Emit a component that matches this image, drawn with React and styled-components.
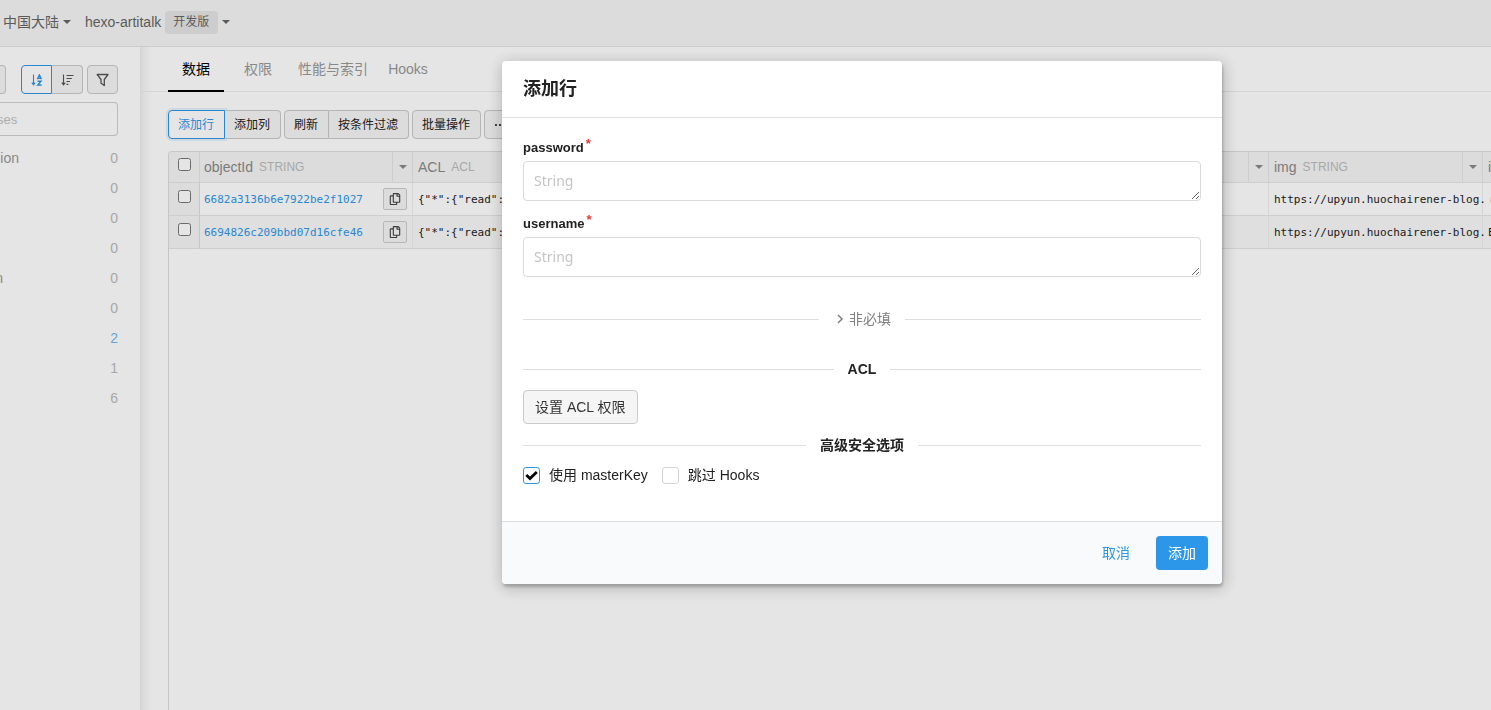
import React from "react";
import styled, { createGlobalStyle, css } from "styled-components";
import { FaRegCopy } from "react-icons/fa";

const sans = `"Liberation Sans", "Noto Sans CJK SC", sans-serif`;
const mono = `"DejaVu Sans Mono", monospace`;
const blue = "#2c97e9";

const GlobalStyle = createGlobalStyle`
  *, *::before, *::after { box-sizing: border-box; }
  body { margin: 0; background: #fff; font: 14px/20px ${sans}; color: #222; overflow: hidden; }
  button, input, textarea { font-family: inherit; }
`;

const Page = styled.div`
  display: flex;
  flex-direction: column;
  height: 100vh;
  overflow: hidden;
`;

const TopBar = styled.header`
  display: flex;
  align-items: center;
  height: 47px;
  padding: 0 3px 2px;
  border-bottom: 1px solid #e2e2e2;
  background: #f5f5f5;
  color: #666;
`;

const MenuButton = styled.button`
  display: flex;
  align-items: center;
  gap: 4px;
  margin-right: 14px;
  padding: 0;
  border: 0;
  background: none;
  color: inherit;
  font-size: 14px;
  line-height: 20px;
`;

const Stage = styled.span`
  padding: 2px 9px 2px 8px;
  border-radius: 4px;
  background: #e5e5e5;
  font-size: 12px;
  line-height: 19px;
`;

const Caret = styled.span`
  border: 4px solid transparent;
  border-top-color: currentColor;
  border-bottom: 0;
`;

const Columns = styled.div`
  display: flex;
  flex: 1;
  min-height: 0;
`;

const Sidebar = styled.aside`
  flex: none;
  width: 140px;
  padding: 18px 22px 0 0;
`;

const SideTools = styled.div`
  display: flex;
  gap: 4px;
  margin-bottom: 8px;
`;

const Group = styled.div`
  display: flex;
`;

const Button = styled.button`
  display: flex;
  align-items: center;
  justify-content: center;
  height: 29px;
  padding: 0 10px 0 9px;
  border: 1px solid #cacaca;
  border-radius: 4px;
  background: #f5f5f5;
  color: #222;
  font-size: 12px;
  line-height: 18px;
  white-space: nowrap;

  ${Group} > &:not(:first-child) {
    border-left: 0;
    border-top-left-radius: 0;
    border-bottom-left-radius: 0;
  }
  ${Group} > &:not(:last-child) {
    border-top-right-radius: 0;
    border-bottom-right-radius: 0;
  }
  ${(p) => p.$active && css`
    border-color: ${blue};
    background: #fff;
    color: ${blue};
  `}
  ${(p) => p.$focused && css`
    box-shadow: 0 0 0 2px rgba(44, 151, 233, 0.12);
  `}
`;

const IconButton = styled(Button)`
  width: 31px;
  padding: 0;
  color: ${(p) => (p.$active ? blue : "#555")};
`;

const EdgeButton = styled(IconButton)`
  width: 6px;
  margin-right: auto;
  border-left: 0;
  border-radius: 0 4px 4px 0;
`;

const Search = styled.input`
  display: block;
  width: 100%;
  height: 34px;
  padding: 0;
  border: 1px solid #d0d0d0;
  border-left: 0;
  border-radius: 0 4px 4px 0;
  background: #fff;
  font-size: 13px;
  text-indent: -3px;
  &::placeholder { color: #c2c2c2; }
`;

const ClassList = styled.ul`
  margin: 7px 0 0;
  padding: 0;
  list-style: none;
`;

const ClassItem = styled.li`
  display: flex;
  justify-content: space-between;
  height: 30px;
  line-height: 30px;
  color: #999;
`;

const ClassName = styled.span`
  display: flex;
  justify-content: flex-end;
  width: ${(p) => p.$width}px;
`;

const Count = styled.span`
  color: ${(p) => (p.$active ? "#74b9f0" : "#bbb")};
`;

const Main = styled.main`
  display: flex;
  flex: 1;
  flex-direction: column;
  min-width: 0;
  background: linear-gradient(to right, #ededed, #f8f8f8 5px, #fff 12px);
`;

const Tabs = styled.nav`
  display: flex;
  height: 45px;
  padding-left: 28px;
  border-bottom: 1px solid #ececec;
`;

const Tab = styled.a`
  width: ${(p) => p.$width}px;
  height: 45px;
  border-bottom: 2px solid ${(p) => (p.$active ? "#000" : "transparent")};
  color: ${(p) => (p.$active ? "#000" : "#999")};
  line-height: 44px;
  text-align: center;
  text-decoration: none;
  white-space: nowrap;
`;

const Toolbar = styled.div`
  display: flex;
  gap: 3px;
  padding: 18px 0 12px 28px;
`;

const Sheet = styled.div`
  flex: 1;
  margin-left: 28px;
  overflow: hidden;
  border: solid #ddd;
  border-width: 1px 0 0 1px;
  border-top-left-radius: 4px;
`;

const Table = styled.table`
  width: 1528px;
  table-layout: fixed;
  border-collapse: separate;
  border-spacing: 0;
`;

const Col = styled.col`
  width: ${(p) => p.$width}px;
`;

const Th = styled.th`
  height: 31px;
  padding: 0;
  border: solid #e6e6e6;
  border-width: 0 1px 1px 0;
  background: #f5f5f5;
  color: #8a8a8a;
  font-weight: 400;
  text-align: left;
`;

const HeadCell = styled.div`
  display: flex;
  align-items: center;
  height: 30px;
  padding-left: ${(p) => (p.$key ? 4 : 5)}px;
`;

const Type = styled.small`
  flex: 1;
  margin-left: 6px;
  color: #bbb;
  font-size: 12px;
`;

const ColumnMenu = styled.button`
  display: flex;
  align-items: center;
  justify-content: center;
  width: 20px;
  height: 30px;
  margin-left: auto;
  padding: 0;
  border: 0;
  border-left: 1px solid #e6e6e6;
  background: none;
  color: #888;
`;

const Td = styled.td`
  height: 33px;
  padding: 0 0 0 ${(p) => (p.$key ? 4 : 5)}px;
  border: solid #e6e6e6;
  border-width: 0 1px 1px 0;
  border-right-color: #eee;
  color: ${(p) => (p.$empty ? "#ccc" : "#222")};
  font: 11px/16px ${mono};
  white-space: nowrap;
  tr:nth-child(even) > & { background: #f9f9f9; }
`;

const Value = styled.span`
  display: block;
  padding-top: 2px;
`;

const CheckCell = styled(Td)`
  padding: 0;
  border-right-color: #ddd;
  tr:nth-child(n) > & { background: #f5f5f5; }
`;

const RowCheck = styled.input`
  display: block;
  width: 13px;
  height: 13px;
  margin: 0 0 5px 9px;
`;

const IdCell = styled.div`
  display: flex;
  align-items: center;
  justify-content: space-between;
  padding-right: 5px;
  color: ${blue};
`;

const CopyButton = styled.button`
  display: flex;
  align-items: center;
  justify-content: center;
  width: 24px;
  height: 22px;
  padding: 0;
  border: 1px solid #ccc;
  border-radius: 2px;
  background: #f5f5f5;
  color: #444;
`;

const Overlay = styled.div`
  position: fixed;
  inset: 0;
  display: flex;
  align-items: flex-start;
  justify-content: center;
  padding: 61px 0 0 233px;
  background: rgba(0, 0, 0, 0.1);
`;

const Dialog = styled.form`
  width: 720px;
  overflow: hidden;
  border-radius: 4px;
  background: #fff;
  box-shadow: 1px 3px 3px rgba(0, 0, 0, 0.2), 1px 3px 15px 2px rgba(0, 0, 0, 0.2);
`;

const Title = styled.h2`
  margin: 0;
  padding: 14px 21px;
  border-bottom: 1px solid #dedede;
  font-size: 18px;
  line-height: 28px;
`;

const Body = styled.div`
  padding: 20px 21px 37px;
`;

const Field = styled.div`
  margin-bottom: 13px;
`;

const FieldLabel = styled.label`
  display: flex;
  margin-bottom: 4px;
  font-size: 13px;
  font-weight: 700;
  line-height: 19px;
`;

const Required = styled.span`
  margin-left: 2px;
  color: #e33;
  line-height: 12px;
`;

const TextArea = styled.textarea`
  display: block;
  width: 100%;
  height: 40px;
  padding: 9px 10px;
  border: 1px solid #dadada;
  border-radius: 4px;
  font: 14px/20px "Noto Sans", "Noto Sans CJK SC", sans-serif;
  resize: vertical;
  &::placeholder { color: #c4c4c4; }
`;

const Divider = styled.h3`
  display: flex;
  align-items: center;
  gap: 14px;
  margin: ${(p) => (p.$spaced ? "32px 0 30px" : "0 0 11px")};
  font-size: 14px;
  line-height: 20px;
  &::before, &::after {
    flex: 1;
    height: 1px;
    background: #dedede;
    content: "";
  }
`;

const Toggle = styled.button`
  display: flex;
  align-items: center;
  padding: 0 0 0 4px;
  border: 0;
  background: none;
  color: #808080;
  font-size: 14px;
  line-height: 20px;
`;

const AclButton = styled(Button)`
  height: 34px;
  margin-bottom: 11px;
  padding: 0 11px;
  color: #333;
  font-size: 14px;
  line-height: 20px;
`;

const Options = styled.div`
  display: flex;
  gap: 14px;
`;

const Option = styled.label`
  display: flex;
  align-items: center;
  gap: 9px;
  line-height: 18px;
`;

const Tick = styled.input`
  appearance: none;
  width: 17px;
  height: 17px;
  margin: 0;
  border: 1px solid #d4d4d4;
  border-radius: 3px;
  background: #fff;
  &:checked {
    border-color: ${blue};
  }
`;

const TickBox = styled.span`
  display: grid;
  & > * { grid-area: 1 / 1; }
  & > svg { pointer-events: none; }
`;

const Footer = styled.footer`
  display: flex;
  justify-content: flex-end;
  gap: 14px;
  padding: 14px;
  border-top: 1px solid #dedede;
  background: #f9fafc;
`;

const Action = styled.button`
  height: 34px;
  padding: 0 12px;
  border: 0;
  border-radius: 4px;
  background: ${(p) => (p.$primary ? blue : "none")};
  color: ${(p) => (p.$primary ? "#fff" : blue)};
  font-size: 14px;
  line-height: 20px;
`;

const DownArrow = () => <path d="M2.500 .5v10.500M.8 8.700l1.700 2.200 1.700-2.200" fill="none" stroke="currentColor" strokeWidth="1.100" />;

const SortAlphaIcon = () => (
  <svg width="12" height="12" viewBox="0 0 12 12" aria-hidden="true">
    <DownArrow />
    <path d="M6.400 5.200 8.400.9l2 4.300M7.200 4.200h2.400M6.500 7.200h3.500L6.700 11h3.900" fill="none" stroke="currentColor" strokeWidth="1.400" />
  </svg>
);

const SortAmountIcon = () => (
  <svg width="13" height="12" viewBox="0 0 13 12" aria-hidden="true">
    <DownArrow />
    <path d="M5.500 1.500h7M5.500 4.500h5.300M5.500 7.500h3.500M5.500 10.300h1.800" fill="none" stroke="currentColor" strokeWidth="1.200" />
  </svg>
);

const FilterIcon = () => (
  <svg width="14" height="14" viewBox="0 0 14 14" aria-hidden="true">
    <path d="M1.200 1.500h10.800L8.300 6.500v6L5 10.300V6.500Z" fill="none" stroke="currentColor" strokeWidth="1.300" strokeLinejoin="round" />
  </svg>
);

const ChevronIcon = () => (
  <svg width="12" height="12" viewBox="0 0 12 12" aria-hidden="true">
    <path d="m1 2 4 4-4 4" fill="none" stroke="currentColor" strokeWidth="1.500" />
  </svg>
);

const CheckIcon = () => (
  <svg width="17" height="17" viewBox="0 0 17 17" aria-hidden="true">
    <path d="m3.300 8 3.700 3.600 6.800-6.700" fill="none" stroke="#000" strokeWidth="2.800" />
  </svg>
);

const DotsIcon = () => (
  <svg width="12" height="4" viewBox="0 0 12 4" fill="currentColor" aria-hidden="true">
    <circle cx="2" cy="2" r="1.100" /><circle cx="6" cy="2" r="1.100" /><circle cx="10" cy="2" r="1.100" />
  </svg>
);

const classes = [
  { name: "ion", width: 19, count: 0 },
  { count: 0 },
  { count: 0 },
  { count: 0 },
  { name: "n", width: 3, count: 0 },
  { count: 0 },
  { count: 2, active: true },
  { count: 1 },
  { count: 6 },
];

const tabs = [
  { label: "数据", width: 56, active: true },
  { label: "权限", width: 68 },
  { label: "性能与索引", width: 82 },
  { label: "Hooks", width: 68 },
];

const columns = [
  { name: "objectId", type: "STRING", width: 213, key: true },
  { name: "ACL", type: "ACL", width: 214 },
  { width: 214 },
  { width: 214 },
  { width: 214 },
  { name: "img", type: "STRING", width: 214 },
  { name: "i", width: 214 },
];

const rows = [
  { id: "6682a3136b6e7922be2f1027", tail: "(", empty: true },
  { id: "6694826c209bbd07d16cfe46", tail: "E" },
];

const FormField = ({ name }) => (
  <Field>
    <FieldLabel htmlFor={name}>{name}<Required>*</Required></FieldLabel>
    <TextArea id={name} placeholder="String" rows={1} />
  </Field>
);

const CheckOption = ({ label, checked }) => (
  <Option>
    <TickBox>
      <Tick type="checkbox" defaultChecked={checked} />
      {checked && <CheckIcon />}
    </TickBox>
    {label}
  </Option>
);

export default function App() {
  return (
    <>
      <GlobalStyle />
      <Page>
        <TopBar>
          <MenuButton>中国大陆<Caret /></MenuButton>
          <MenuButton>hexo-artitalk<Stage>开发版</Stage><Caret /></MenuButton>
        </TopBar>
        <Columns>
          <Sidebar>
            <SideTools>
              <EdgeButton aria-label="新建" />
              <Group>
                <IconButton $active aria-label="按名称排序"><SortAlphaIcon /></IconButton>
                <IconButton aria-label="按数量排序"><SortAmountIcon /></IconButton>
              </Group>
              <IconButton aria-label="过滤"><FilterIcon /></IconButton>
            </SideTools>
            <Search placeholder="ses" aria-label="搜索" />
            <ClassList>
              {classes.map((c, i) => (
                <ClassItem key={i}>
                  <ClassName $width={c.width || 0}>{c.name}</ClassName>
                  <Count $active={c.active}>{c.count}</Count>
                </ClassItem>
              ))}
            </ClassList>
          </Sidebar>
          <Main>
            <Tabs>
              {tabs.map((t) => (
                <Tab key={t.label} href="#" $width={t.width} $active={t.active}>{t.label}</Tab>
              ))}
            </Tabs>
            <Toolbar>
              <Group>
                <Button $active $focused>添加行</Button>
                <Button>添加列</Button>
              </Group>
              <Group>
                <Button>刷新</Button>
                <Button>按条件过滤</Button>
              </Group>
              <Button>批量操作</Button>
              <Button aria-label="更多"><DotsIcon /></Button>
            </Toolbar>
            <Sheet>
              <Table>
                <colgroup>
                  <Col $width={31} />
                  {columns.map((c, i) => <Col key={i} $width={c.width} />)}
                </colgroup>
                <thead>
                  <tr>
                    <Th><RowCheck type="checkbox" aria-label="全选" /></Th>
                    {columns.map((c, i) => (
                      <Th key={i}>
                        <HeadCell $key={c.key}>
                          {c.name}
                          {c.type && <Type>{c.type}</Type>}
                          <ColumnMenu aria-label="列菜单"><Caret /></ColumnMenu>
                        </HeadCell>
                      </Th>
                    ))}
                  </tr>
                </thead>
                <tbody>
                  {rows.map((r) => (
                    <tr key={r.id}>
                      <CheckCell><RowCheck type="checkbox" aria-label={r.id} /></CheckCell>
                      <Td $key>
                        <IdCell>
                          <Value>{r.id}</Value>
                          <CopyButton aria-label="复制"><FaRegCopy size={12} /></CopyButton>
                        </IdCell>
                      </Td>
                      <Td><Value>{'{"*":{"read":'}</Value></Td>
                      <Td />
                      <Td />
                      <Td />
                      <Td><Value>https://upyun.huochairener-blog.</Value></Td>
                      <Td $empty={r.empty}><Value>{r.tail}</Value></Td>
                    </tr>
                  ))}
                </tbody>
              </Table>
            </Sheet>
          </Main>
        </Columns>
      </Page>
      <Overlay>
        <Dialog role="dialog" aria-labelledby="dialog-title" onSubmit={(e) => e.preventDefault()}>
          <Title id="dialog-title">添加行</Title>
          <Body>
            <FormField name="password" />
            <FormField name="username" />
            <Divider $spaced><Toggle type="button"><ChevronIcon />非必填</Toggle></Divider>
            <Divider>ACL</Divider>
            <AclButton type="button">设置 ACL 权限</AclButton>
            <Divider>高级安全选项</Divider>
            <Options>
              <CheckOption label="使用 masterKey" checked />
              <CheckOption label="跳过 Hooks" />
            </Options>
          </Body>
          <Footer>
            <Action type="button">取消</Action>
            <Action type="submit" $primary>添加</Action>
          </Footer>
        </Dialog>
      </Overlay>
    </>
  );
}
